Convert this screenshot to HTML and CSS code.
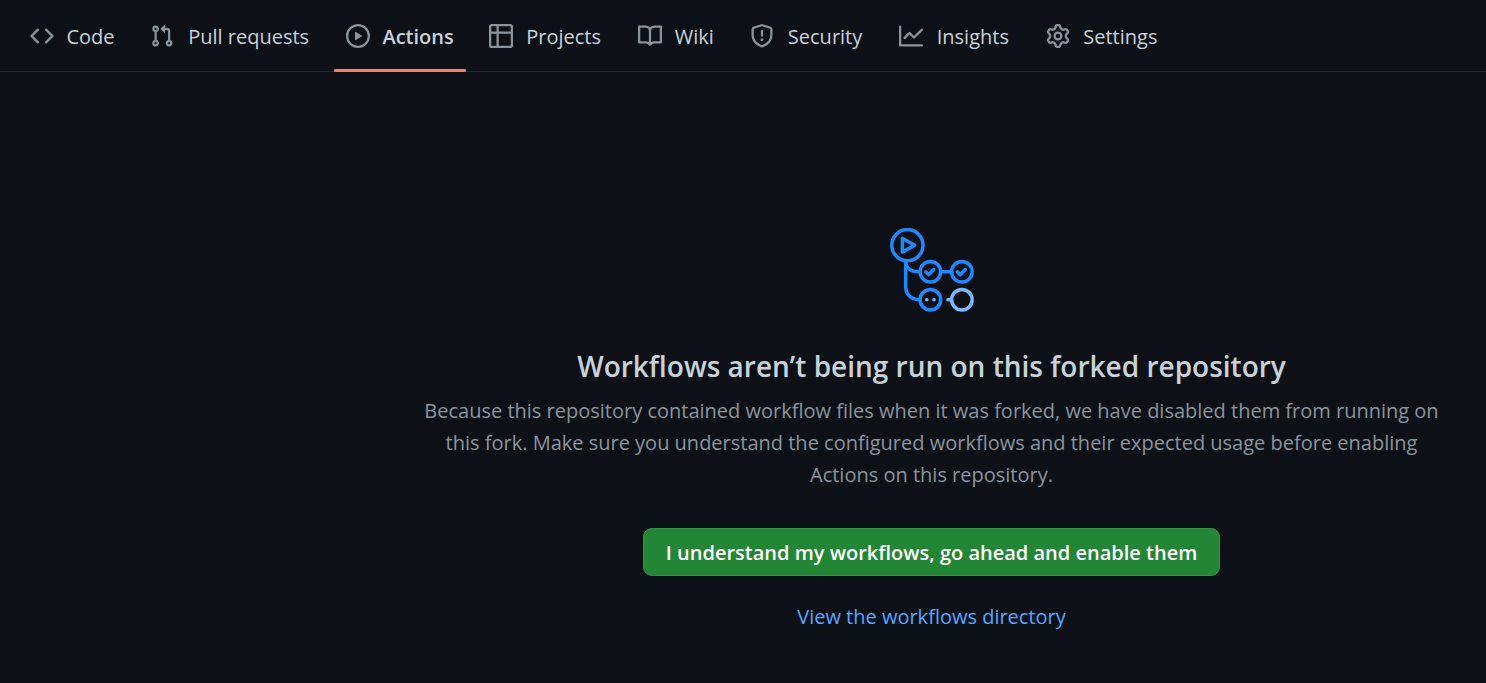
FILE: index.html
```html
<!DOCTYPE html>
<html lang="en">
<head>
<meta charset="utf-8">
<title>Actions</title>
<meta name="viewport" content="width=device-width, initial-scale=1">
<link rel="stylesheet" href="styles.css">
</head>
<body>
<nav class="tabs" aria-label="Repository">
  <a class="tab" href="#code"><svg class="icon" viewBox="0 0 16 16" aria-hidden="true"><path d="m11.28 3.22 4.25 4.25a.75.75 0 0 1 0 1.06l-4.25 4.25a.749.749 0 0 1-1.275-.326.749.749 0 0 1 .215-.734L13.94 8l-3.72-3.72a.749.749 0 0 1 .326-1.275.749.749 0 0 1 .734.215Zm-6.56 0a.751.751 0 0 1 1.042.018.751.751 0 0 1 .018 1.042L2.06 8l3.72 3.72a.749.749 0 0 1-.326 1.275.749.749 0 0 1-.734-.215L.47 8.53a.75.75 0 0 1 0-1.06Z"/></svg><span class="tab-label" data-label="Code">Code</span></a>
  <a class="tab" href="#pulls"><svg class="icon" viewBox="0 0 16 16" aria-hidden="true"><path d="M1.5 3.25a2.25 2.25 0 1 1 3 2.122v5.256a2.251 2.251 0 1 1-1.5 0V5.372A2.25 2.25 0 0 1 1.5 3.25Zm5.677-.177L9.573.677A.25.25 0 0 1 10 .854V2.5h1A2.5 2.5 0 0 1 13.5 5v5.628a2.251 2.251 0 1 1-1.5 0V5a1 1 0 0 0-1-1h-1v1.646a.25.25 0 0 1-.427.177L7.177 3.427a.25.25 0 0 1 0-.354ZM3.75 2.5a.75.75 0 1 0 0 1.5.75.75 0 0 0 0-1.5Zm0 9.5a.75.75 0 1 0 0 1.5.75.75 0 0 0 0-1.5Zm8.25.75a.75.75 0 1 0 1.5 0 .75.75 0 0 0-1.5 0Z"/></svg><span class="tab-label" data-label="Pull requests">Pull requests</span></a>
  <a class="tab tab-current" href="#actions" aria-current="page"><svg class="icon" viewBox="0 0 16 16" aria-hidden="true"><path d="M8 0a8 8 0 1 1 0 16A8 8 0 0 1 8 0ZM1.5 8a6.5 6.5 0 1 0 13 0 6.5 6.5 0 0 0-13 0Zm4.879-2.773 4.264 2.559a.25.25 0 0 1 0 .428l-4.264 2.559A.25.25 0 0 1 6 10.559V5.442a.25.25 0 0 1 .379-.215Z"/></svg><span class="tab-label" data-label="Actions">Actions</span></a>
  <a class="tab" href="#projects"><svg class="icon" viewBox="0 0 16 16" aria-hidden="true"><path d="M0 1.75C0 .784.784 0 1.75 0h12.5C15.216 0 16 .784 16 1.75v12.5A1.75 1.75 0 0 1 14.25 16H1.75A1.75 1.75 0 0 1 0 14.25ZM6.5 6.5v8h7.75a.25.25 0 0 0 .25-.25V6.5Zm8-1.5V1.75a.25.25 0 0 0-.25-.25H6.5V5Zm-13 1.5v7.75c0 .138.112.25.25.25H5v-8ZM5 5V1.5H1.75a.25.25 0 0 0-.25.25V5Z"/></svg><span class="tab-label" data-label="Projects">Projects</span></a>
  <a class="tab" href="#wiki"><svg class="icon" viewBox="0 0 16 16" aria-hidden="true"><path d="M0 1.75A.75.75 0 0 1 .75 1h4.253c1.227 0 2.317.59 3 1.501A3.743 3.743 0 0 1 11.006 1h4.245a.75.75 0 0 1 .75.75v10.5a.75.75 0 0 1-.75.75h-4.507a2.25 2.25 0 0 0-1.591.659l-.622.621a.75.75 0 0 1-1.06 0l-.622-.621A2.25 2.25 0 0 0 5.258 13H.75a.75.75 0 0 1-.75-.75Zm7.251 10.324.004-5.073-.002-2.253A2.25 2.25 0 0 0 5.003 2.5H1.5v9h3.757a3.75 3.75 0 0 1 1.994.574ZM8.755 4.75l-.004 7.322a3.752 3.752 0 0 1 1.992-.572H14.5v-9h-3.495a2.25 2.25 0 0 0-2.25 2.25Z"/></svg><span class="tab-label" data-label="Wiki">Wiki</span></a>
  <a class="tab" href="#security"><svg class="icon" viewBox="0 0 16 16" aria-hidden="true"><path d="M7.467.133a1.748 1.748 0 0 1 1.066 0l5.25 1.68A1.75 1.75 0 0 1 15 3.48V7c0 1.566-.32 3.182-1.303 4.682-.983 1.498-2.585 2.813-5.032 3.855a1.697 1.697 0 0 1-1.33 0c-2.447-1.042-4.049-2.357-5.032-3.855C1.32 10.182 1 8.566 1 7V3.48a1.75 1.75 0 0 1 1.217-1.667Zm.61 1.429a.25.25 0 0 0-.153 0l-5.25 1.68a.25.25 0 0 0-.174.238V7c0 1.358.275 2.666 1.057 3.86.784 1.194 2.121 2.34 4.366 3.297a.196.196 0 0 0 .154 0c2.245-.956 3.582-2.104 4.366-3.298C13.225 9.666 13.5 8.36 13.5 7V3.48a.251.251 0 0 0-.174-.237l-5.25-1.68ZM8.75 4.75v3a.75.75 0 0 1-1.5 0v-3a.75.75 0 0 1 1.5 0ZM9 10.5a1 1 0 1 1-2 0 1 1 0 0 1 2 0Z"/></svg><span class="tab-label" data-label="Security">Security</span></a>
  <a class="tab" href="#insights"><svg class="icon" viewBox="0 0 16 16" aria-hidden="true"><path d="M1.5 1.75V13.5h13.75a.75.75 0 0 1 0 1.5H.75a.75.75 0 0 1-.75-.75V1.75a.75.75 0 0 1 1.5 0Zm14.28 2.53-5.25 5.25a.75.75 0 0 1-1.06 0L7 7.06 4.28 9.78a.751.751 0 0 1-1.042-.018.751.751 0 0 1-.018-1.042l3.25-3.25a.75.75 0 0 1 1.06 0L10 7.94l4.72-4.72a.751.751 0 0 1 1.042.018.751.751 0 0 1 .018 1.042Z"/></svg><span class="tab-label" data-label="Insights">Insights</span></a>
  <a class="tab" href="#settings"><svg class="icon" viewBox="0 0 16 16" aria-hidden="true"><path d="M8 0a8.2 8.2 0 0 1 .701.031C9.444.095 9.99.645 10.16 1.29l.288 1.107c.018.066.079.158.212.224.231.114.454.243.668.386.123.082.233.09.299.071l1.103-.303c.644-.176 1.392.021 1.82.63.27.385.506.792.704 1.218.315.675.111 1.422-.364 1.891l-.814.806c-.049.048-.098.147-.088.294.016.257.016.515 0 .772-.01.147.038.246.088.294l.814.806c.475.469.679 1.216.364 1.891a7.977 7.977 0 0 1-.704 1.217c-.428.61-1.176.807-1.82.63l-1.102-.302c-.067-.019-.177-.011-.3.071a5.909 5.909 0 0 1-.668.386c-.133.066-.194.158-.211.224l-.29 1.106c-.168.646-.715 1.196-1.458 1.26a8.006 8.006 0 0 1-1.402 0c-.743-.064-1.289-.614-1.458-1.26l-.289-1.106c-.018-.066-.079-.158-.212-.224a5.738 5.738 0 0 1-.668-.386c-.123-.082-.233-.09-.299-.071l-1.103.303c-.644.176-1.392-.021-1.82-.63a8.12 8.12 0 0 1-.704-1.218c-.315-.675-.111-1.422.363-1.891l.815-.806c.05-.048.098-.147.088-.294a6.214 6.214 0 0 1 0-.772c.01-.147-.038-.246-.088-.294l-.815-.806C.635 6.045.431 5.298.746 4.623a7.92 7.92 0 0 1 .704-1.217c.428-.61 1.176-.807 1.82-.63l1.102.302c.067.019.177.011.3-.071.214-.143.437-.272.668-.386.133-.066.194-.158.211-.224l.29-1.106C6.009.645 6.556.095 7.299.03 7.53.01 7.764 0 8 0Zm-.571 1.525c-.036.003-.108.036-.137.146l-.289 1.105c-.147.561-.549.967-.998 1.189-.173.086-.34.183-.5.29-.417.278-.97.423-1.529.27l-1.103-.303c-.109-.03-.175.016-.195.045-.22.312-.412.644-.573.99-.014.031-.021.11.059.19l.815.806c.411.406.562.957.53 1.456a4.709 4.709 0 0 0 0 .582c.032.499-.119 1.05-.53 1.456l-.815.806c-.081.08-.073.159-.059.19.162.346.353.677.573.989.02.03.085.076.195.046l1.102-.303c.56-.153 1.113-.008 1.53.27.161.107.328.204.501.29.447.222.85.629.997 1.189l.289 1.105c.029.109.101.143.137.146a6.6 6.6 0 0 0 1.142 0c.036-.003.108-.036.137-.146l.289-1.105c.147-.561.549-.967.998-1.189.173-.086.34-.183.5-.29.417-.278.97-.423 1.529-.27l1.103.303c.109.029.175-.016.195-.045.22-.313.411-.644.573-.99.014-.031.021-.11-.059-.19l-.815-.806c-.411-.406-.562-.957-.53-1.456a4.709 4.709 0 0 0 0-.582c-.032-.499.119-1.05.53-1.456l.815-.806c.081-.08.073-.159.059-.19a6.464 6.464 0 0 0-.573-.989c-.02-.03-.085-.076-.195-.046l-1.102.303c-.56.153-1.113.008-1.53-.27a4.44 4.44 0 0 0-.501-.29c-.447-.222-.85-.629-.997-1.189l-.289-1.105c-.029-.11-.101-.143-.137-.146a6.6 6.6 0 0 0-1.142 0ZM11 8a3 3 0 1 1-6 0 3 3 0 0 1 6 0ZM9.5 8a1.5 1.5 0 1 0-3.001.001A1.5 1.5 0 0 0 9.5 8Z"/></svg><span class="tab-label" data-label="Settings">Settings</span></a>
</nav>
<main class="content">
  <section class="blankslate">
    <svg class="hero" viewBox="0 0 84 84" aria-hidden="true">
      <g class="hero-line">
        <circle cx="17.4" cy="17.2" r="15.6"/>
        <path d="M12.4 10.3v13.8L24.7 17.2Z"/>
        <path d="M15.7 33v25.5c0 8 5.5 13.2 13.3 13.2M15.7 33c0 6.5 5 10.7 13.3 10.7M51 43.7h11"/>
        <circle cx="40.4" cy="43.7" r="10.3"/>
        <circle cx="71.9" cy="43.7" r="10.3"/>
        <circle cx="40.4" cy="71.7" r="10.3"/>
        <path d="m35.8 43.9 3 2.7 5-5M67.3 43.9l3 2.7 5-5"/>
      </g>
      <g class="hero-line hero-pale">
        <circle cx="71.9" cy="71.7" r="10.3"/>
        <path d="M58 71.7h3"/>
      </g>
      <g class="hero-dots"><circle cx="36.7" cy="71.7" r="1.8"/><circle cx="44" cy="71.7" r="1.8"/></g>
    </svg>
    <h1 class="title">Workflows aren’t being run on this forked repository</h1>
    <p class="description">Because this repository contained workflow files when it was forked, we have disabled them from running on this fork. Make sure you understand the configured workflows and their expected usage before enabling Actions on this repository.</p>
    <button class="enable" type="button">I understand my workflows, go ahead and enable them</button>
    <a class="link" href="#directory">View the workflows directory</a>
  </section>
</main>
</body>
</html>
```

FILE: styles.css
```css
* {
  box-sizing: border-box;
}

body {
  margin: 0;
  background: #0d1117;
  color: #c9d1d9;
  font: 20px/32px "Open Sans", "Noto Sans", sans-serif;
}

.tabs {
  display: flex;
  gap: 11px;
  padding: 0 18px;
  border-bottom: 1px solid #21262d;
}

.tab {
  position: relative;
  display: flex;
  align-items: center;
  gap: 12px;
  padding: 19px 12px 18px;
  color: #c9d1d9;
  text-decoration: none;
  white-space: nowrap;
}

.tab-label {
  display: grid;
  justify-items: center;
  padding-top: 2px;
}

/* Reserves the bold width so tabs keep their size when selected. */
.tab-label::after {
  content: attr(data-label);
  height: 0;
  overflow: hidden;
  font-weight: 600;
  visibility: hidden;
}

.tab-current {
  font-weight: 600;
}

.tab-current::after {
  content: "";
  position: absolute;
  right: 0;
  bottom: -1px;
  left: 0;
  height: 3px;
  border-radius: 2px;
  background: #f78166;
}

.icon {
  flex: none;
  width: 24px;
  height: 24px;
  fill: #8b949e;
}

.content {
  display: grid;
  grid-template-columns: 377px 1fr;
}

.blankslate {
  grid-column: 2;
  display: flex;
  flex-direction: column;
  align-items: center;
  padding: 156px 40px 48px;
  text-align: center;
}

.hero {
  width: 84px;
  height: 84px;
}

.hero-line {
  fill: none;
  stroke: #2088ff;
  stroke-width: 3.5;
  stroke-linecap: round;
  stroke-linejoin: round;
}

.hero-pale {
  stroke: #79b8ff;
}

.hero-dots {
  fill: #79b8ff;
}

.title {
  margin: 32px 0 6px;
  font-size: 28px;
  font-weight: 600;
  line-height: 45px;
}

.description {
  margin: 0;
  color: #8b949e;
}

.enable {
  margin: 37px 0 25px;
  padding: 8px 22px 6px;
  border: 1px solid #37914a;
  border-radius: 9px;
  background: #238636;
  color: #fff;
  font: inherit;
  font-weight: 600;
  cursor: pointer;
}

.link {
  color: #58a6ff;
  text-decoration: none;
}
```
